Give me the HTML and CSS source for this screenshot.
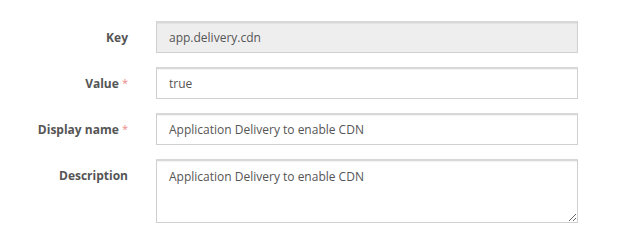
FILE: index.html
```html
<!DOCTYPE html>
<html lang="en">
<head>
    <meta charset="UTF-8">
    <title>Edit property</title>
    <link rel="stylesheet" href="styles.css">
</head>
<body>
    <form class="form">
        <div class="row">
            <label class="label" for="key">Key</label>
            <input class="control" id="key" type="text" value="app.delivery.cdn" disabled>
        </div>
        <div class="row">
            <label class="label" for="value">Value <span class="req">*</span></label>
            <input class="control" id="value" type="text" value="true">
        </div>
        <div class="row">
            <label class="label" for="name">Display name <span class="req">*</span></label>
            <input class="control" id="name" type="text" value="Application Delivery to enable CDN">
        </div>
        <div class="row row-top">
            <label class="label" for="desc">Description</label>
            <textarea class="control area" id="desc">Application Delivery to enable CDN</textarea>
        </div>
    </form>
</body>
</html>
```
FILE: styles.css
```css
* {
    margin: 0;
    padding: 0;
    box-sizing: border-box;
}

body {
    font-family: "Open Sans", Lato, sans-serif;
    font-size: 12px;
    color: #555;
    background: #fff;
}

.form {
    display: flex;
    flex-direction: column;
    gap: 14px;
    padding-top: 21px;
}

.row {
    display: grid;
    grid-template-columns: 128px 422px;
    column-gap: 28px;
    align-items: center;
}

.row-top {
    align-items: start;
}

.label {
    text-align: right;
    font-weight: bold;
    color: #555;
}

.row-top .label {
    padding-top: 8px;
}

.req {
    color: #ec8a8a;
    font-weight: normal;
    font-size: 11px;
    vertical-align: 1px;
}

.control {
    height: 32px;
    padding: 6px 12px;
    font-family: inherit;
    font-size: 12px;
    color: #555;
    background: #fff;
    border: 1px solid #d0d0d0;
    border-top: 2px solid #d8d8d8;
    box-shadow: inset 0 1px 1px rgba(0, 0, 0, 0.05);
    outline: none;
}

.control:disabled {
    background: #eee;
    -webkit-text-fill-color: #555;
}

.area {
    height: 64px;
    resize: vertical;
    padding-top: 7px;
    line-height: 18px;
}
```
